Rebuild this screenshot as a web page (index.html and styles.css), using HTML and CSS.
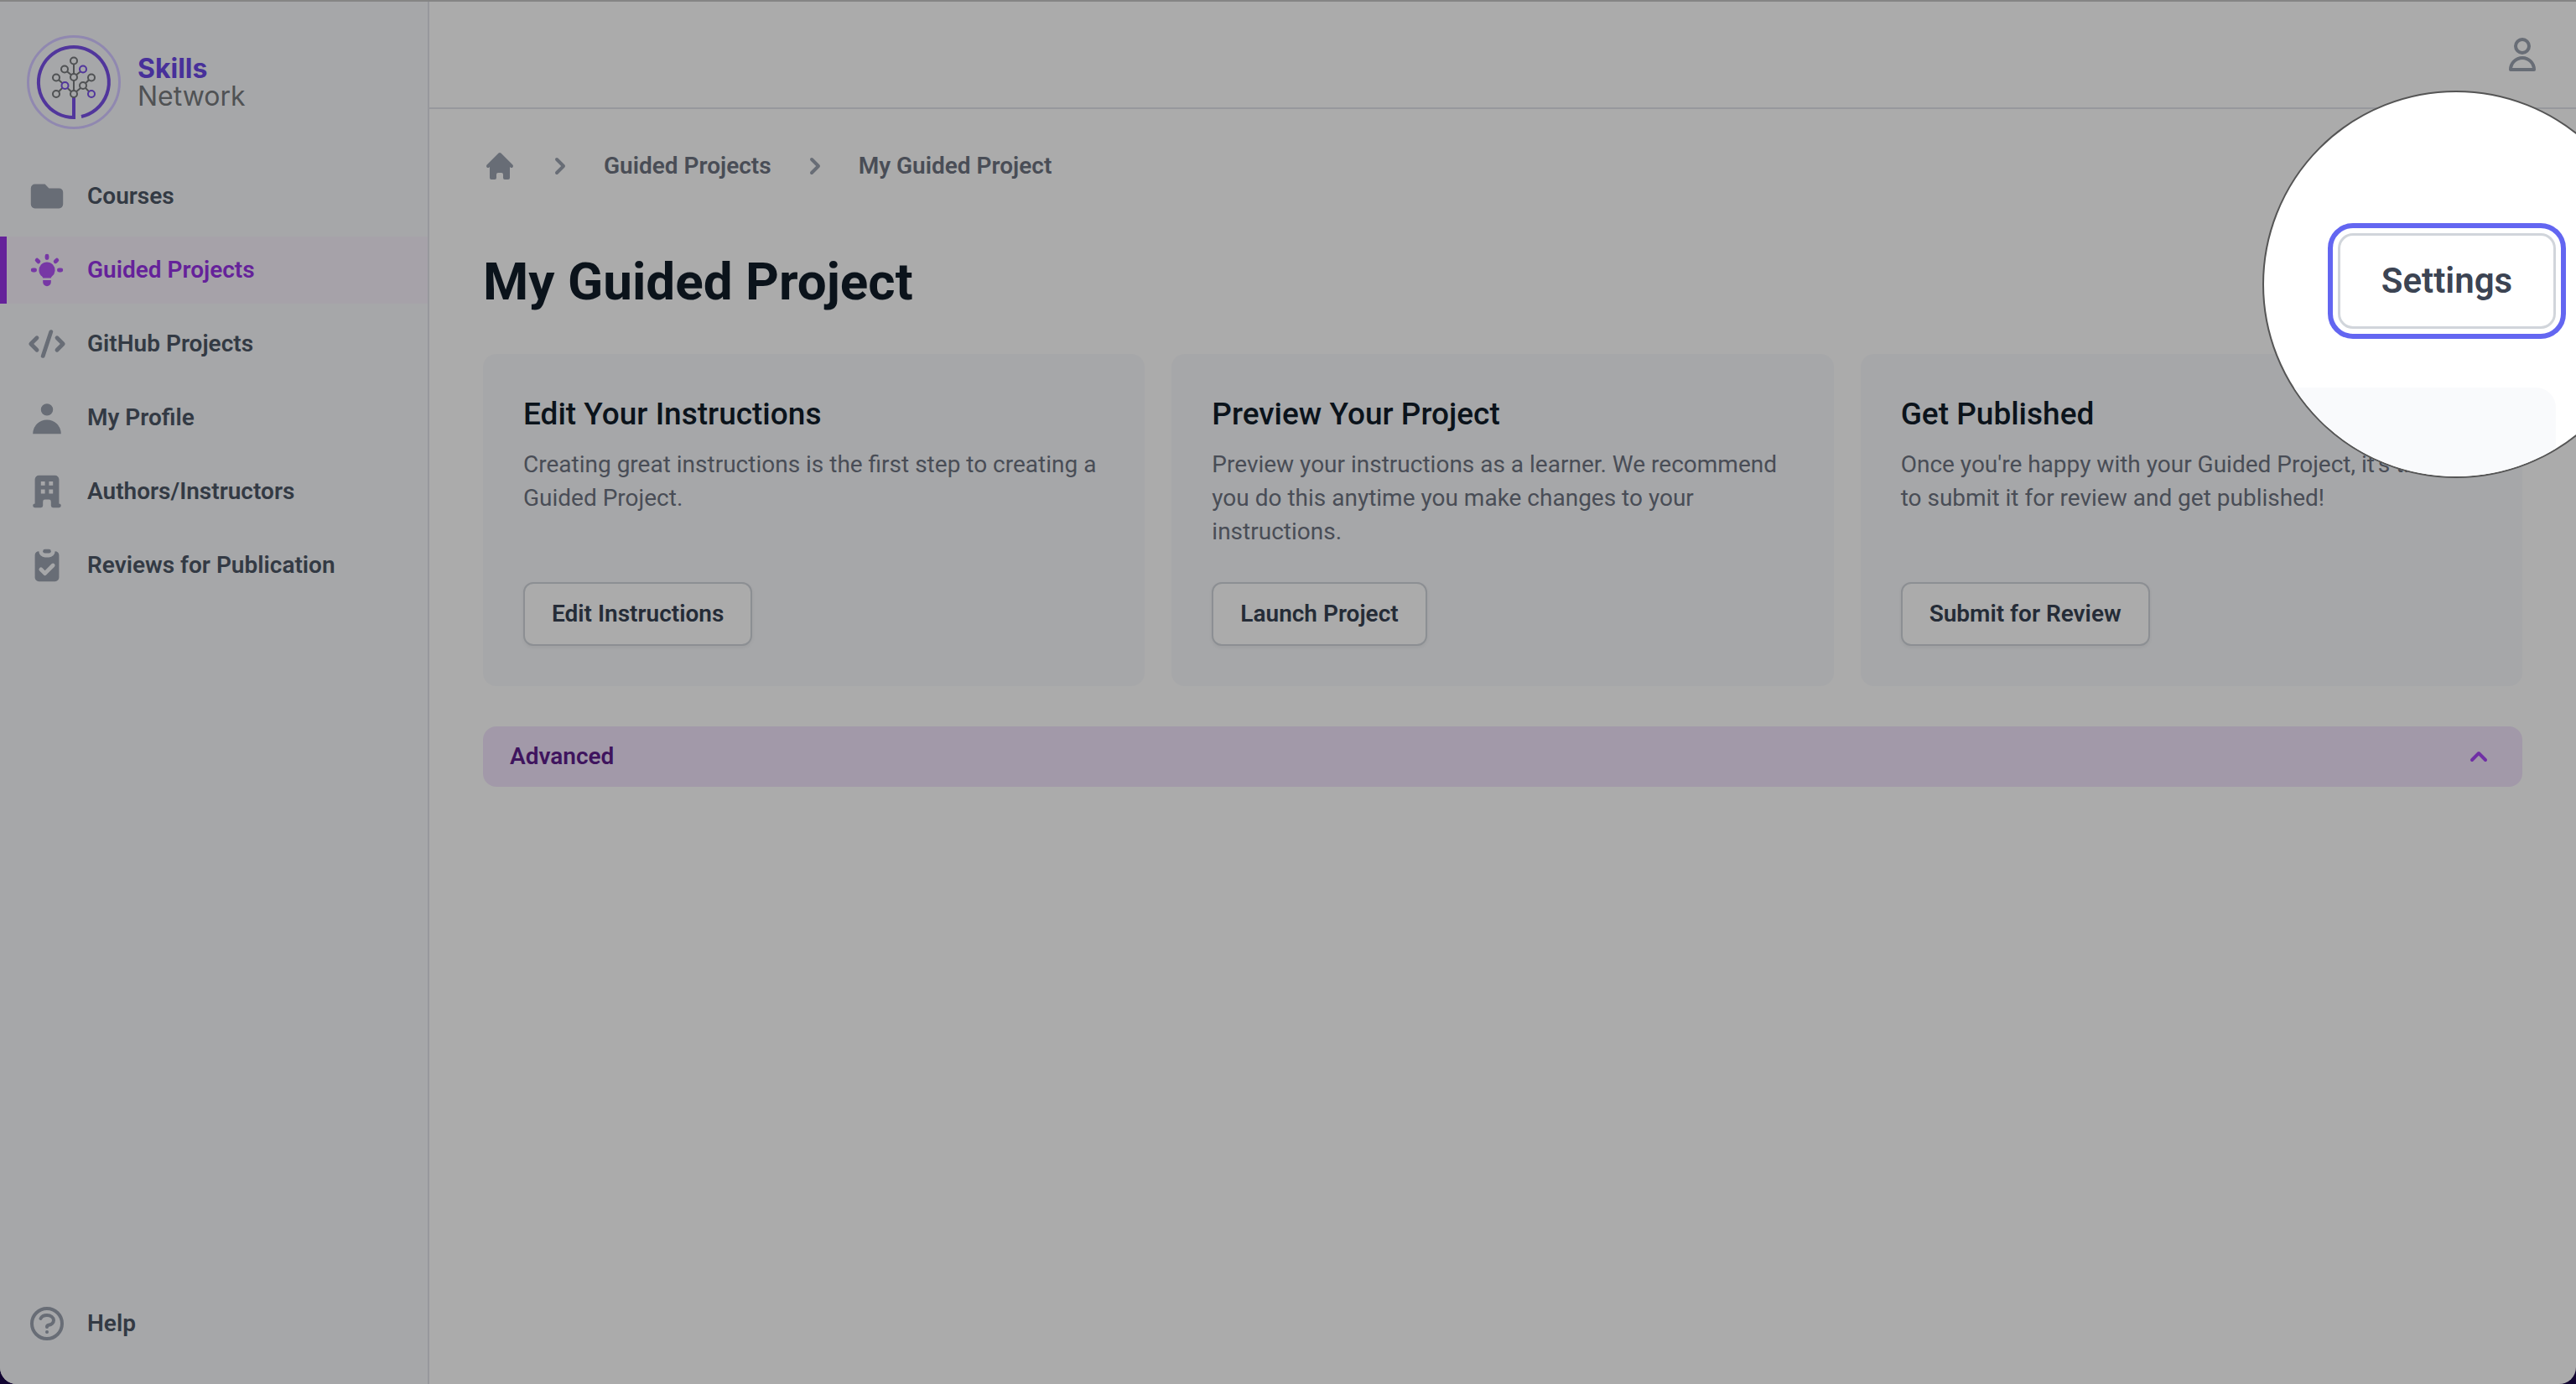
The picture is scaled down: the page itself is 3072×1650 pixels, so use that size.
FILE: index.html
```html
<!DOCTYPE html>
<html lang="en">
<head>
<meta charset="utf-8">
<meta name="viewport" content="width=device-width, initial-scale=1">
<title>My Guided Project</title>
<link rel="stylesheet" href="styles.css">
</head>
<body>
<div class="app">
  <aside class="sidebar">
    <a class="brand" href="#">
      <svg class="brand-mark" viewBox="0 0 112 112" fill="none" aria-hidden="true">
        <circle cx="56" cy="56" r="54.5" stroke="#9088b0" stroke-width="3"/>
        <path d="M56 74V98A42 42 0 1 1 65 97" stroke="#51369c" stroke-width="4"/>
        <g stroke="#505254" stroke-width="2">
          <path d="M56 34.500V46M56 54V66M48 43.300L53 47.300M64 43.300L59 47.300M38 53.300L42.500 57.200M38 67.200L42.500 62.800M48.500 63L53 67.200M74 53.300L70 57.200M74 67.200L70 62.800M64 63L59 67.200"/>
          <circle cx="56" cy="30.500" r="4"/><circle cx="45" cy="40.500" r="4"/><circle cx="35" cy="50.500" r="4"/>
          <circle cx="56" cy="50" r="4"/><circle cx="77" cy="50.500" r="4"/><circle cx="67" cy="60" r="4"/>
          <circle cx="35" cy="70" r="4"/><circle cx="56" cy="70" r="4"/>
        </g>
        <g stroke="#51369c" stroke-width="2"><circle cx="67" cy="40.500" r="4"/><circle cx="45.500" cy="60" r="4"/><circle cx="77" cy="70" r="4"/></g>
      </svg>
      <span class="brand-name"><strong>Skills</strong><span>Network</span></span>
    </a>
    <nav class="nav">
      <a class="nav-link" href="#"><svg class="icon" viewBox="0 0 20 20"><path d="M2 6a2 2 0 012-2h5l2 2h5a2 2 0 012 2v6a2 2 0 01-2 2H4a2 2 0 01-2-2V6z"/></svg>Courses</a>
      <a class="nav-link active" href="#" aria-current="page"><svg class="icon" viewBox="0 0 20 20"><path d="M11 3a1 1 0 10-2 0v1a1 1 0 102 0V3zM15.657 5.757a1 1 0 00-1.414-1.414l-.707.707a1 1 0 001.414 1.414l.707-.707zM18 10a1 1 0 01-1 1h-1a1 1 0 110-2h1a1 1 0 011 1zM5.050 6.464A1 1 0 106.464 5.050l-.707-.707a1 1 0 00-1.414 1.414l.707.707zM5 10a1 1 0 01-1 1H3a1 1 0 110-2h1a1 1 0 011 1zM8 16v-1h4v1a2 2 0 11-4 0zM12 14c.015-.34.208-.646.477-.859a4 4 0 10-4.954 0c.27.213.462.519.476.859h4.002z"/></svg>Guided Projects</a>
      <a class="nav-link" href="#"><svg class="icon" viewBox="0 0 20 20"><path d="M12.316 3.051a1 1 0 01.633 1.265l-4 12a1 1 0 11-1.898-.632l4-12a1 1 0 011.265-.633zM5.707 6.293a1 1 0 010 1.414L3.414 10l2.293 2.293a1 1 0 11-1.414 1.414l-3-3a1 1 0 010-1.414l3-3a1 1 0 011.414 0zm8.586 0a1 1 0 011.414 0l3 3a1 1 0 010 1.414l-3 3a1 1 0 11-1.414-1.414L16.586 10l-2.293-2.293a1 1 0 010-1.414z"/></svg>GitHub Projects</a>
      <a class="nav-link" href="#"><svg class="icon" viewBox="0 0 20 20"><path d="M10 9a3 3 0 100-6 3 3 0 000 6zm-7 9a7 7 0 1114 0H3z"/></svg>My Profile</a>
      <a class="nav-link" href="#"><svg class="icon" viewBox="0 0 20 20"><path fill-rule="evenodd" d="M4 4a2 2 0 012-2h8a2 2 0 012 2v12a1 1 0 110 2h-3a1 1 0 01-1-1v-2a1 1 0 00-1-1H9a1 1 0 00-1 1v2a1 1 0 01-1 1H4a1 1 0 110-2V4zm3 1h2v2H7V5zm2 4H7v2h2V9zm2-4h2v2h-2V5zm2 4h-2v2h2V9z"/></svg>Authors/Instructors</a>
      <a class="nav-link" href="#"><svg class="icon" viewBox="0 0 20 20"><path d="M9 2a1 1 0 000 2h2a1 1 0 100-2H9z"/><path fill-rule="evenodd" d="M4 5a2 2 0 012-2 3 3 0 003 3h2a3 3 0 003-3 2 2 0 012 2v11a2 2 0 01-2 2H6a2 2 0 01-2-2V5zm9.707 5.707a1 1 0 00-1.414-1.414L9 12.586l-1.293-1.293a1 1 0 00-1.414 1.414l2 2a1 1 0 001.414 0l4-4z"/></svg>Reviews for Publication</a>
    </nav>
    <a class="nav-link" href="#"><svg class="icon line" viewBox="0 0 24 24"><path d="M8.228 9c.549-1.165 2.030-2 3.772-2 2.210 0 4 1.343 4 3 0 1.400-1.278 2.575-3.006 2.907-.542.104-.994.540-.994 1.093m0 3h.010M21 12a9 9 0 11-18 0 9 9 0 0118 0z"/></svg>Help</a>
  </aside>

  <div class="content">
    <header class="topbar">
      <button class="account" type="button" aria-label="Account"><svg class="icon line" viewBox="0 0 24 24"><path d="M16 7a4 4 0 11-8 0 4 4 0 018 0zM12 14a7 7 0 00-7 7h14a7 7 0 00-7-7z"/></svg></button>
    </header>
    <main class="main">
      <nav class="crumbs" aria-label="Breadcrumb">
        <a href="#" aria-label="Home"><svg class="icon small" viewBox="0 0 20 20"><path d="M10.707 2.293a1 1 0 00-1.414 0l-7 7a1 1 0 001.414 1.414L4 10.414V17a1 1 0 001 1h2a1 1 0 001-1v-2a1 1 0 011-1h2a1 1 0 011 1v2a1 1 0 001 1h2a1 1 0 001-1v-6.586l.293.293a1 1 0 001.414-1.414l-7-7z"/></svg></a>
        <svg class="icon small" viewBox="0 0 20 20"><path d="M7.293 14.707a1 1 0 010-1.414L10.586 10 7.293 6.707a1 1 0 011.414-1.414l4 4a1 1 0 010 1.414l-4 4a1 1 0 01-1.414 0z"/></svg>
        <a href="#">Guided Projects</a>
        <svg class="icon small" viewBox="0 0 20 20"><path d="M7.293 14.707a1 1 0 010-1.414L10.586 10 7.293 6.707a1 1 0 011.414-1.414l4 4a1 1 0 010 1.414l-4 4a1 1 0 01-1.414 0z"/></svg>
        <a href="#" aria-current="page">My Guided Project</a>
      </nav>
      <h1 class="title">My Guided Project</h1>
      <div class="cards">
        <section class="card">
          <h2>Edit Your Instructions</h2>
          <p>Creating great instructions is the first step to creating a Guided Project.</p>
          <button class="button" type="button">Edit Instructions</button>
        </section>
        <section class="card">
          <h2>Preview Your Project</h2>
          <p>Preview your instructions as a learner. We recommend you do this anytime you make changes to your instructions.</p>
          <button class="button" type="button">Launch Project</button>
        </section>
        <section class="card">
          <h2>Get Published</h2>
          <p>Once you're happy with your Guided Project, it's time to&nbsp;submit it for review and get published!</p>
          <button class="button" type="button">Submit for Review</button>
        </section>
      </div>
      <button class="advanced" type="button" aria-expanded="false">Advanced
        <svg class="icon small" viewBox="0 0 20 20"><path d="M14.707 12.707a1 1 0 01-1.414 0L10 9.414l-3.293 3.293a1 1 0 01-1.414-1.414l4-4a1 1 0 011.414 0l4 4a1 1 0 010 1.414z"/></svg>
      </button>
    </main>
  </div>

  <div class="lens">
    <div class="lens-card"></div>
    <button class="settings" type="button">Settings</button>
  </div>
</div>
</body>
</html>
```
FILE: styles.css
```css
:root {
  --page: #ababab;
  --panel: #a6a7a9;
  --rule: #97989d;
  --icon: #686d76;
  --muted: #494d56;
  --ink: #0b131b;
}

* { box-sizing: border-box; }

body {
  margin: 0;
  background: #120532;
  font-family: Roboto, "Liberation Sans", sans-serif;
  font-size: 28px;
  line-height: 40px;
  color: var(--muted);
}

a { color: inherit; text-decoration: none; }
button { font: inherit; cursor: pointer; }

.app {
  position: relative;
  display: flex;
  min-height: 100vh;
  overflow: hidden;
  background: var(--page);
  border-top: 2px solid #858585;
  border-radius: 0 0 20px 20px;
}

.icon { flex: none; width: 48px; height: 48px; fill: var(--icon); }
.icon.small { width: 40px; height: 40px; }
.icon.line {
  fill: none;
  stroke: var(--icon);
  stroke-width: 2;
  stroke-linecap: round;
  stroke-linejoin: round;
}

/* Sidebar */
.sidebar {
  flex: none;
  display: flex;
  flex-direction: column;
  width: 512px;
  padding: 40px 0 32px;
  background: var(--panel);
  border-right: 2px solid var(--rule);
}
.brand {
  display: flex;
  align-items: center;
  gap: 20px;
  padding-left: 32px;
}
.brand-mark { width: 112px; height: 112px; }
.brand-name {
  display: flex;
  flex-direction: column;
  font-family: Inter, sans-serif;
  font-size: 32px;
  line-height: 33px;
  color: #505254;
}
.brand-name strong { color: #47309a; }

.nav {
  flex: 1;
  display: flex;
  flex-direction: column;
  gap: 8px;
  padding-top: 40px;
}
.nav-link {
  display: flex;
  align-items: center;
  gap: 24px;
  height: 80px;
  padding-left: 32px;
  font-weight: 600;
  color: #333a44;
}
.nav-link.active {
  padding-left: 24px;
  border-left: 8px solid #65229a;
  background: #a6a2a9;
  color: #65229a;
}
.nav-link.active .icon { fill: #7738a5; }

/* Main column */
.content { flex: 1; min-width: 0; }
.topbar {
  display: flex;
  align-items: center;
  justify-content: flex-end;
  height: 128px;
  padding-right: 40px;
  border-bottom: 2px solid var(--rule);
}
.account { display: flex; padding: 0; border: 0; background: none; }

.main { padding: 48px 64px; }
.crumbs {
  display: flex;
  align-items: center;
  gap: 32px;
  font-weight: 600;
}
.crumbs a { display: flex; }
.title {
  margin: 80px 0 48px;
  font-size: 62px;
  line-height: 76px;
  font-weight: 700;
  color: var(--ink);
}

.cards {
  display: grid;
  grid-template-columns: repeat(3, 1fr);
  gap: 32px;
}
.card {
  display: flex;
  flex-direction: column;
  align-items: flex-start;
  padding: 48px;
  border-radius: 16px;
  background: var(--panel);
}
.card h2 {
  margin: 0 0 16px;
  font-size: 37px;
  line-height: 48px;
  font-weight: 500;
  color: var(--ink);
}
.card p { margin: 0 0 40px; }
.button {
  margin-top: auto;
  height: 76px;
  padding: 0 32px;
  border: 2px solid #8c8f93;
  border-radius: 12px;
  background: var(--page);
  box-shadow: 0 2px 4px rgba(0, 0, 0, 0.05);
  font-weight: 600;
  color: #252c37;
}

.advanced {
  display: flex;
  align-items: center;
  justify-content: space-between;
  width: 100%;
  height: 72px;
  margin-top: 48px;
  padding: 0 32px;
  border: 0;
  border-radius: 16px;
  background: #a299a9;
  font-weight: 600;
  color: #3f145e;
}
.advanced .icon { fill: #702fa5; }

/* Magnifier over the settings button */
.lens {
  position: absolute;
  top: 106px;
  right: -88px;
  width: 462px;
  height: 462px;
  overflow: hidden;
  border: 2px solid #555;
  border-radius: 50%;
  background: #fff;
}
.lens-card {
  position: absolute;
  top: 352px;
  right: 110px;
  width: 400px;
  height: 200px;
  border-radius: 24px;
  background: #f9fafc;
}
.settings {
  position: absolute;
  top: 168px;
  left: 88px;
  width: 260px;
  height: 114px;
  border: 3px solid #d1d5db;
  border-radius: 18px;
  outline: 6px solid #6366f1;
  outline-offset: 6px;
  background: #fff;
  font-size: 42px;
  font-weight: 600;
  color: #3c4453;
}
```
